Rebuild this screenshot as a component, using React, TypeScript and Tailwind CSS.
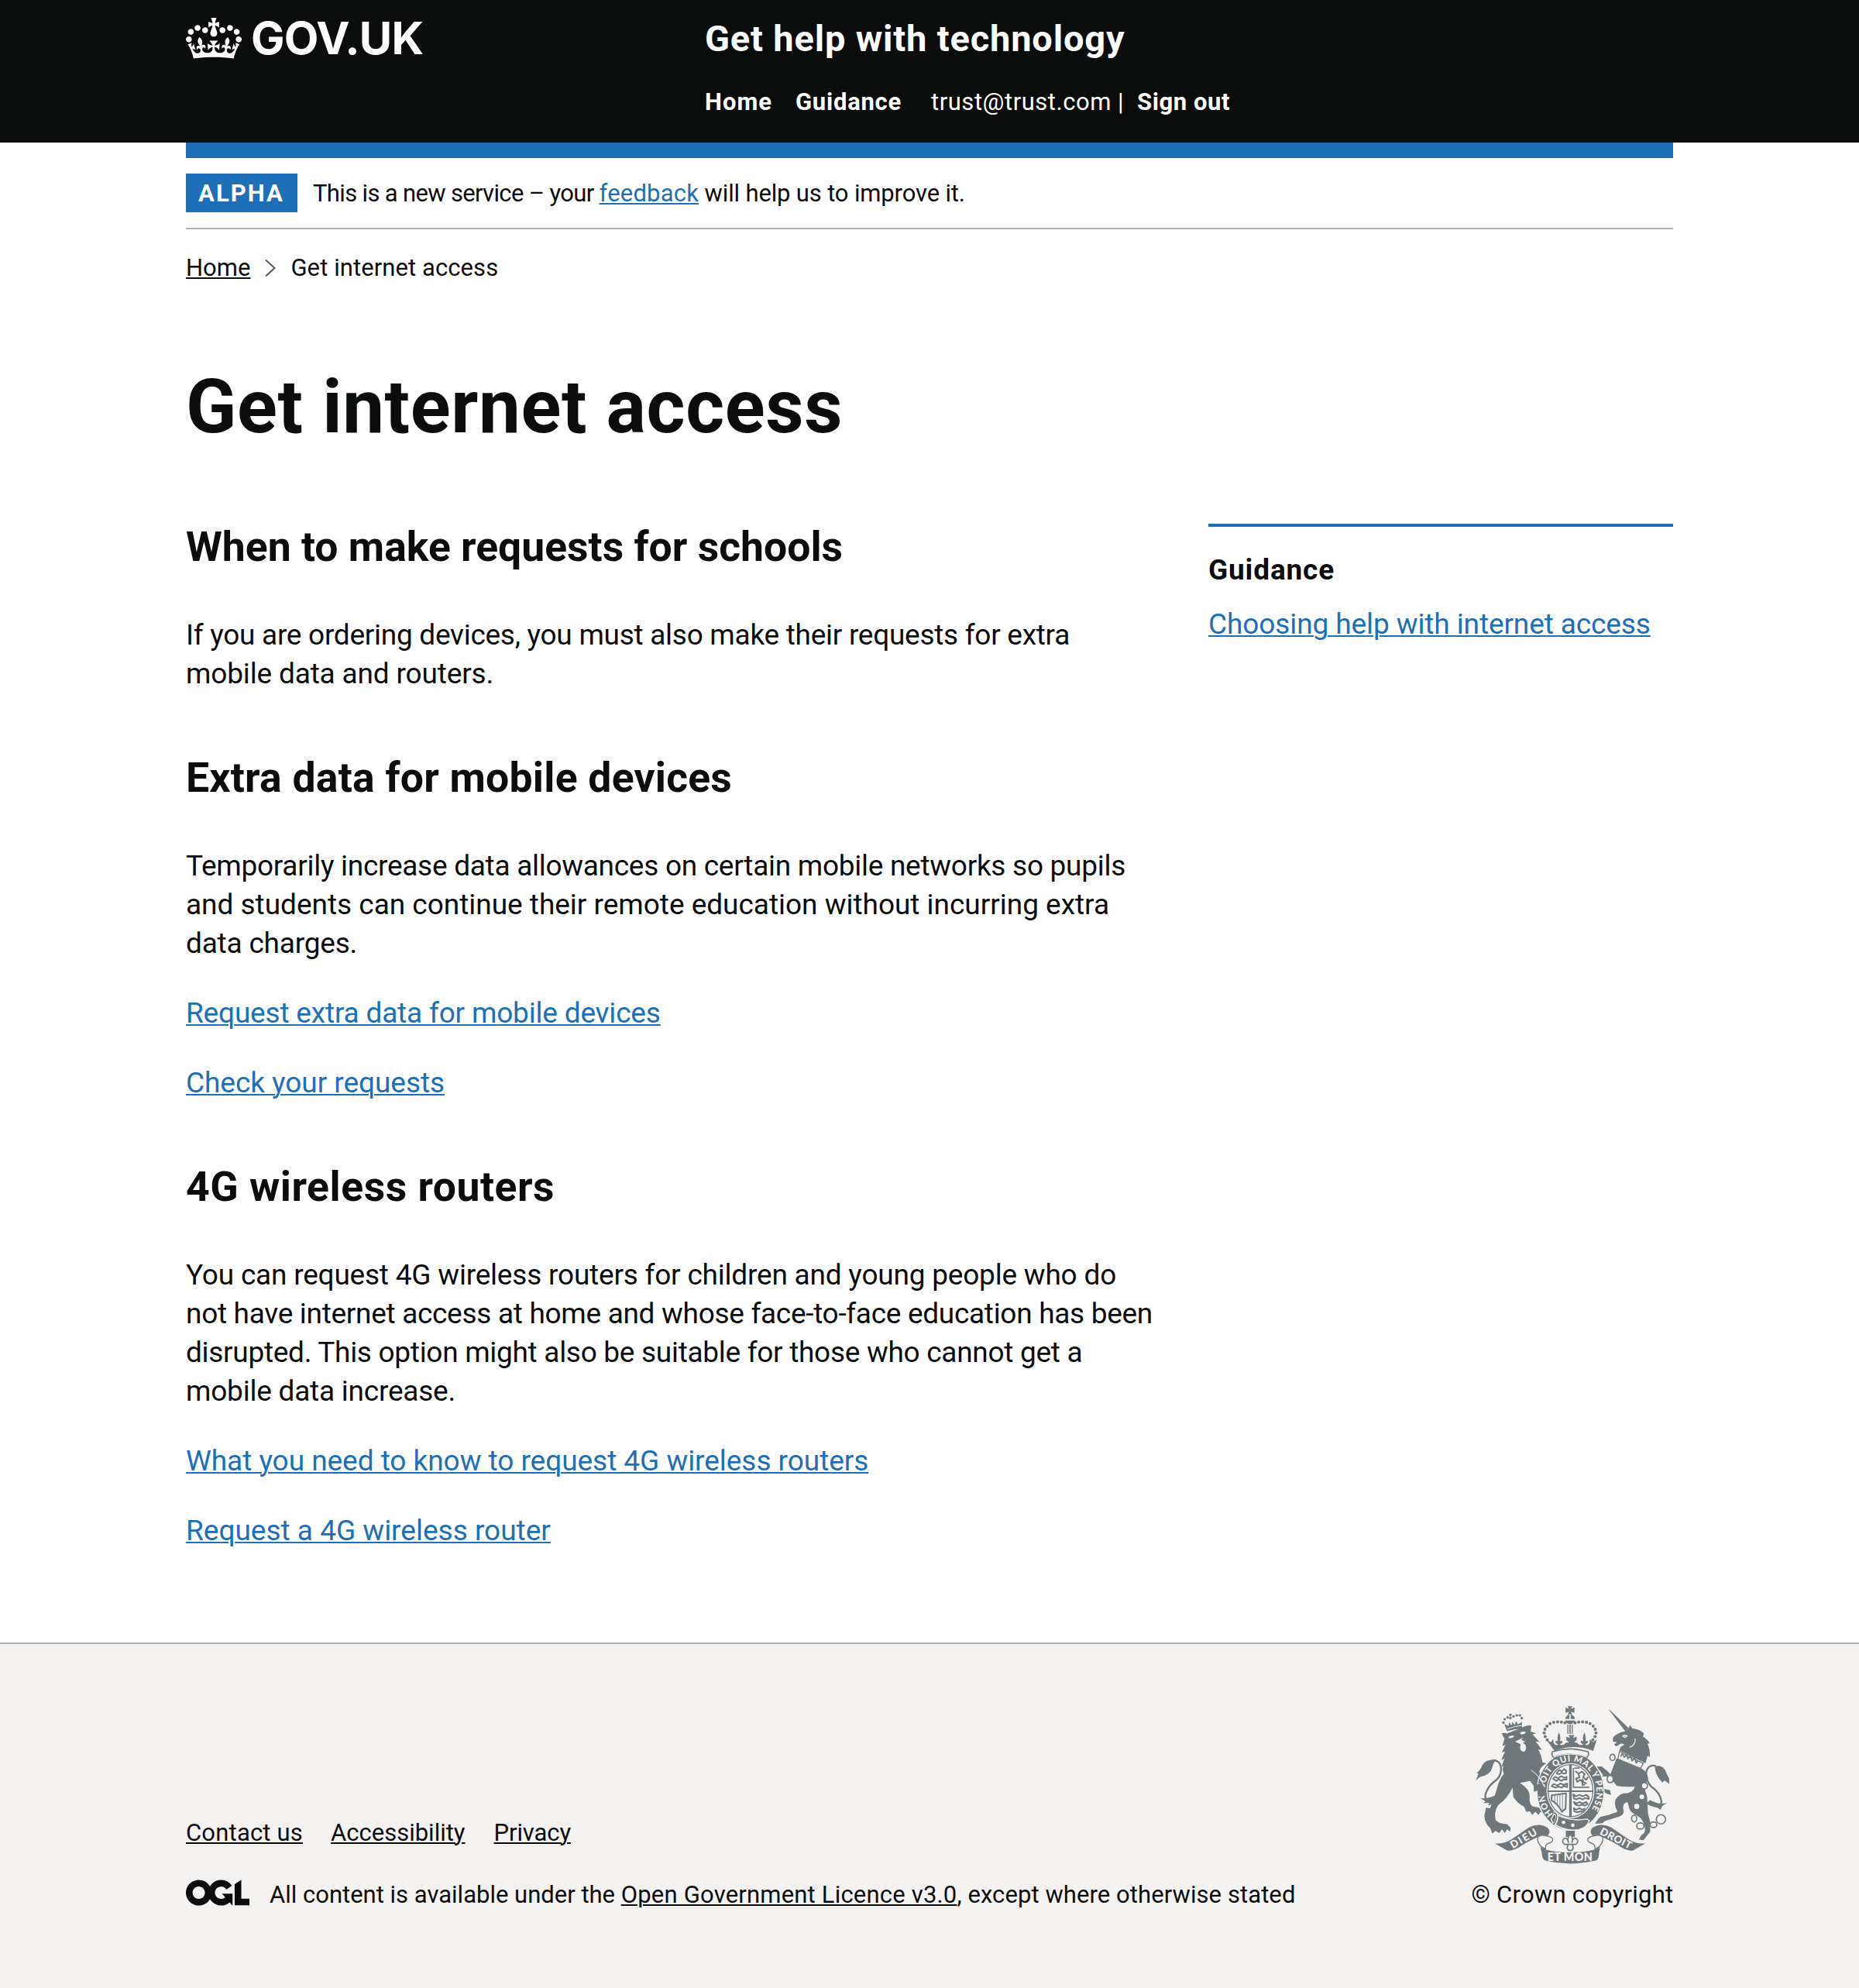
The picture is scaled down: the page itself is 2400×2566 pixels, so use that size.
import React from "react";

const BEADS = [
  [418, 131], [404, 128], [389, 127], [374, 129], [360, 134],
  [348, 144], [340, 156], [337, 170], [341, 184], [349, 197],
];
const LION_CROWN_BEADS = [
  [179, 130], [184, 117], [195, 110], [206, 100], [218, 106], [231, 102], [243, 102], [250, 113], [206, 112],
];

function Crown() {
  return (
    <svg viewBox="0 0 132 97" className="mt-[23px] h-[53px] w-[72px]" fill="currentColor" fillRule="evenodd" aria-hidden="true">
      <path d="M25 30.2c3.5 1.5 7.7-.2 9.1-3.7 1.5-3.6-.2-7.8-3.9-9.2-3.6-1.4-7.6.3-9.1 3.9-1.4 3.5.3 7.5 3.9 9zM9 39.5c3.6 1.5 7.8-.2 9.2-3.7 1.5-3.6-.2-7.8-3.9-9.1-3.6-1.5-7.6.2-9.1 3.8-1.4 3.5.3 7.5 3.8 9zM4.4 57.2c3.5 1.5 7.7-.2 9.1-3.8 1.5-3.6-.2-7.7-3.9-9.1-3.5-1.5-7.6.3-9.1 3.8-1.4 3.5.3 7.6 3.9 9.1zm38.3-21.4c3.5 1.5 7.7-.2 9.1-3.8 1.5-3.6-.2-7.7-3.9-9.1-3.6-1.5-7.6.3-9.1 3.8-1.3 3.6.4 7.7 3.9 9.1zm64.4-5.6c-3.6 1.5-7.8-.2-9.1-3.7-1.5-3.6.2-7.8 3.8-9.2 3.6-1.4 7.7.3 9.2 3.9 1.3 3.5-.4 7.5-3.9 9zm15.9 9.3c-3.6 1.5-7.7-.2-9.1-3.7-1.5-3.6.2-7.8 3.7-9.1 3.6-1.5 7.7.2 9.2 3.8 1.5 3.5-.3 7.5-3.8 9zm4.7 17.7c-3.6 1.5-7.8-.2-9.2-3.8-1.5-3.6.2-7.7 3.9-9.1 3.6-1.5 7.7.3 9.2 3.8 1.3 3.5-.4 7.6-3.9 9.1zM89.3 35.8c-3.6 1.5-7.8-.2-9.2-3.8-1.4-3.6.2-7.7 3.9-9.1 3.6-1.5 7.7.3 9.2 3.8 1.4 3.6-.3 7.7-3.9 9.1zM69.7 17.7l8.9 4.7V9.3l-8.9 2.8c-.2-.3-.5-.6-.9-.9L72.4 0H59.6l3.5 11.2c-.3.3-.6.5-.9.9l-8.8-2.8v13.1l8.8-4.7c.3.3.6.7.9.9l-5 15.4v.1c-.2.8-.4 1.6-.4 2.4 0 4.1 3.1 7.5 7 8.1h.2c.3 0 .7.1 1 .1.4 0 .7 0 1-.1h.2c4-.6 7.1-4.1 7.1-8.1 0-.8-.1-1.7-.4-2.4V34l-5.1-15.4c.4-.2.7-.6 1-.9zM66 92.8c16.9 0 32.8 1.1 47.1 3.2 4-16.9 8.9-26.7 14-33.5l-9.6-3.4c1 4.9 1.1 7.2 0 10.2-1.5-1.4-3-4.3-4.2-8.7L108.6 76c2.8-2 5-3.2 7.5-3.3-4.4 9.4-10 11.9-13.6 11.2-4.3-.8-6.3-4.6-5.6-7.9 1-4.7 5.7-5.9 8-.5 4.3-8.7-3-11.4-7.6-8.8 7.1-7.2 7.9-13.5 2.1-21.1-8 6.1-8.1 12.3-4.5 20.8-4.7-5.4-12.1-2.5-9.5 6.2 3.4-5.2 7.9-2 7.2 3.1-.6 4.3-6.4 7.8-13.5 7.2-10.3-.9-10.9-8-11.2-13.8 2.5-.5 7.1 1.8 11 7.3L80.2 60c-4.1 4.4-8 5.3-12.3 5.4 1.4-4.4 8-11.6 8-11.6H55.5s6.4 7.2 7.9 11.6c-4.2-.1-8-1-12.3-5.4l1.4 16.4c3.9-5.5 8.5-7.7 10.9-7.3-.3 5.8-.9 12.8-11.1 13.8-7.2.6-12.9-2.9-13.5-7.2-.7-5 3.8-8.3 7.1-3.1 2.7-8.7-4.6-11.6-9.4-6.2 3.7-8.5 3.6-14.7-4.6-20.8-5.8 7.6-5 13.9 2.2 21.1-4.7-2.6-11.9.1-7.7 8.8 2.3-5.5 7.1-4.2 8.1.5.7 3.3-1.3 7.1-5.7 7.9-3.5.7-9-1.8-13.5-11.2 2.5.1 4.7 1.3 7.5 3.3l-4.7-15.4c-1.2 4.4-2.7 7.2-4.3 8.7-1.1-3-.9-5.3 0-10.2l-9.5 3.4c5 6.9 9.9 16.7 14 33.5 14.8-2.1 30.8-3.2 47.7-3.2z" />
    </svg>
  );
}

function OglLogo() {
  return (
    <svg viewBox="0 0 483.2 195.7" className="h-[34px] w-[82px]" fill="currentColor" aria-hidden="true">
      <path d="M421.5 142.8V.1l-50.7 32.3v161.1h112.4v-50.7zm-122.3-9.6A47.12 47.12 0 0 1 221 97.8c0-26 21.1-47.1 47.1-47.1 16.7 0 31.4 8.7 39.7 21.8l42.7-27.2A97.63 97.63 0 0 0 268.1 0c-36.5 0-68.3 20.1-85.1 49.7A98 98 0 0 0 97.8 0C43.9 0 0 43.9 0 97.8s43.9 97.8 97.8 97.8c36.5 0 68.3-20.1 85.1-49.7a97.76 97.76 0 0 0 149.6 25.4l19.4 22.2h3v-87.8h-80l24.3 27.5zM97.8 145c-26 0-47.1-21.1-47.1-47.1s21.1-47.1 47.1-47.1 47.1 21.1 47.1 47.1S123.8 145 97.8 145" />
    </svg>
  );
}

function RoyalArms() {
  const G = "#6f777b";
  const B = "#f3f2f1";
  return (
    <svg className="h-[204px] w-[250px]" viewBox="71 66 751 612" fill={G} fontFamily="Lato, sans-serif" fontWeight="700" aria-hidden="true">
      {/* crown above the shield */}
      <path d="M428 66h18l-5 11 13-6v22l-13-6 5 11h-18l5-11-13 6v-22l13 6z" />
      <path d="M435 99v17h-16q2-14 16-17zM440 99v17h16q-2-14-16-17zM418 122h39l-7 10q-13 8-25 0zM427 138h4v36h-4zM435 138h5v36h-5zM444 138h4v36h-4z" />
      {BEADS.map(([x, y]) => (
        <g key={x}>
          <circle cx={x} cy={y} r="6" />
          <circle cx={875 - x} cy={y} r="6" />
        </g>
      ))}
      <path d="M346 196l16 10 10-12 2 16q8 12 17 4l-10-6 0-8 9 2q-4-14 4-34 9 20 4 34l9-2 0 8-10 6q14 8 24-6l12-2-10-8v-14l14 6-5-12h22l-5 12 14-6v14l-10 8 12 2q10 14 24 6l-10-6 0-8 10 2q-5-14 4-34 8 20 4 34l9-2 0 8-10 6q9 8 17-4l2-16 10 12 16-10-14 44q-75-30-150 0z" />

      {/* lion */}
      <path d="M193 163l-11-28 16 8 4-14 8 12 4-14 8 12 6-14 8 12 14-10 2 26q-30 2-59 10z" />
      <path d="M194 155q28-12 58-14" stroke={B} strokeWidth="3" fill="none" />
      {LION_CROWN_BEADS.map(([x, y], i) => (
        <circle key={i} cx={x} cy={y} r="5" />
      ))}
      <path d="M172 172q8-4 20 0 30-10 58-22 20-12 38-8l-4 22 22 8-14 4 28 30-16-4 24 34-14-2q14 26 16 50l16 4q-24 12-28 34 14 18 22 28 10 14 14 32 8 30-6 40l-22 4-16-22 2-10-16 4 8-14q-16-20-22-28l-39 8q38 24 38 52-4 38 18 40l28 6 8 22-12-8-8 12-12-12-12 12-10-14-14 2-8-20q-26-12-42-38l-2-36q-22 44-54 66-20 24-12 60 12 14 44 16l14 14-2 14-12-8-8 14-12-14-10 14-14-8-14 10-6-20q-22-18-24-48l6-32 16 2q18-40 28-80 6-28 26-54-8-14-2-30l-8 4 12-32-12 4 14-32-12 4 14-30-12 4 8-28z" />
      <g fill={B}>
        <path d="M198 186q10-8 24-4-8 10-22 8zM242 170q10-8 24-4-4 10-18 10zM224 204l32-16-8 10 16 6-10 4q16 8 12 24-2 12-12 10-12-4-10-18l2-10z" />
      </g>
      <path d="M160 400q-8 34-38 32-22-8-8-36 8-20 28-36 28-18 28-52-4-36-36-30" fill="none" stroke={G} strokeWidth="7" />
      <path d="M152 274q-44-2-56 22-8 22-22 30l8 2-10 28q12-16 26-18 34-10 38-36 4-18 16-28zM88 422q30 6 62-12l8 4q-6 30-38 38l4-10-24 0 10-6z" />

      {/* unicorn */}
      <path d="M588 80l6 3 70 68-12 14z" />
      <path d="M604 188q18-20 46-24 12-4 20-24l8 12q30 4 46 20l-4 12q18 10 26 26l-8 2q12 26 8 52l-8-6-8 30-102-50 6-14 14-8q-10-10-24 2l-8 4-8-8 12-8-16-2z" />
      <path d="M642 182q10-6 16 0l-8 6zM668 226q24-8 22-34" fill="none" stroke={B} strokeWidth="4" />
      <path d="M629 242l92 46-10 20-88-36z" fill={B} stroke={G} strokeWidth="4" />
      <path d="M634 262l6-12 8 14 8-10 6 16 10-10 6 18 10-10 6 18 8-8" fill="none" stroke={G} strokeWidth="5" />
      <path d="M618 268l100 42q24 18 22 42-22 30-4 62 2 40 4 70l8 30v40l-12 14-14 18-18-2 10-18q16-8 14-26-4-36-36-52-26-12-28-38l-4-12q-20 4-16 28 6 18-14 28l-38 12q-20 4-28 14l-30 2 12-18 8-8 34-8 34-12q-16-24-8-48 18-26 44-24 28-6 30-26-34 2-68-2l-16-18-14-18-34-2-12 10 6 14 20 14-2 10 24 6 4 18-16-4-16-12-12 10-22-28 2-24q12-12 34-16l-14-22-18 6-8-14 18-6 16 0 20 16 14 14z" />
      <path d="M738 444q54 22 54-8-4-34-40-58-28-34-16-66 10-20 34-14" fill="none" stroke={G} strokeWidth="7" />
      <path d="M766 300q34-10 46 28l10 20v20l-18-14-8 8q-28-26-30-62zM748 430q30 20 66 12l-18 10-8 16-12-8q-30-6-40-20z" />

      {/* garter */}
      <ellipse cx="439" cy="397" rx="130" ry="151" stroke={B} strokeWidth="4" />
      <ellipse cx="439" cy="394" rx="93" ry="107" fill={B} />
      <ellipse cx="439" cy="394" rx="87" ry="101" fill="none" stroke={G} strokeWidth="4" />
      <path d="M369 243q69-22 138 0q6 10-4 22q-65-24-130 0q-10-12-4-22z" fill={B} stroke={G} strokeWidth="5" />
      <path d="M374 264q65-24 128 0" fill="none" stroke={B} strokeWidth="3" />
      <path id="garter" d="M372 485A101 117 0 1 1 506 485" fill="none" />
      <text fill={B} fontSize="34" fontWeight="900">
        <textPath href="#garter" textLength="510">HONI SOIT QUI MAL Y PENSE</textPath>
      </text>
      <path d="M296 372l36-6q14 20 13 44l-22 10-12-14 2-12-16 2z" />
      <path d="M286 314q34 22 52 66" stroke={B} strokeWidth="3" fill="none" />
      <path d="M376 482q60 34 126 22l10 6q-10 28-42 35-50 8-98-24l-8-16z" stroke={B} strokeWidth="4" />
      <path d="M372 480q18 0 14 20-2 18-12 26" fill="none" stroke={B} strokeWidth="12" />
      <path d="M372 480q18 0 12 22-2 16-12 24" fill="none" stroke={G} strokeWidth="5" />
      <g fill={B}>
        <circle cx="412" cy="517" r="7" />
        <circle cx="448" cy="528" r="7" />
      </g>

      {/* shield quarters */}
      <path d="M434 292h10v205h-10zM350 393h178v6H350z" />
      <path d="M448 306h5v76h-5zM448 378h64v5h-64zM454 304h22l-4 5h-18z" />
      <g fill="none" stroke={G} strokeWidth="6" strokeLinejoin="round">
        <path d="M388 322l8-8 10 6 8-10 8 6v10l-10 2-8-4-8 6-10-2zM372 348l8-8 12 6 10-8 14 6 8-4v12l-12-2-8 6-10-6-10 6zM366 376l8-8 14 6 12-8 14 6 12-6v14l-14-4-8 6-12-4-12 4z" />
        <path d="M458 318l12 10 4 14-14 6 6 12 10-8 8 6 2 14 10-2M470 328l14-8 10 10-6 12 12 10 8-12M484 348l6 14 12 4" />
        <path d="M450 408l10 8 14-6 12 6 14-6 10 8v8l-14-4-10 6-12-6-12 6-10-4zM452 438l10 6 12-6 12 6 14-6 6 8-12 6-12-4-10 4-14-4zM452 462l10 6 12-6 10 6 10-4-4 12-14-2-10 4-12-4z" />
        <path d="M366 412l56-8-2 60-14 12q-16-30-40-44z" />
      </g>
      <path d="M378 414v24M388 412v36M398 411v50M408 409v60" stroke={G} strokeWidth="2.5" />

      {/* pendant */}
      <path d="M421 549h35v24h-10l-8-12-8 12h-9z" />
      <path d="M438 562q14 16 6 34 6-24 18-16 12 12-2 22h-14l4 14q-4 12-12 10-8 2-12-10l4-14h-14q-14-10-2-22 12-8 18 16-8-18 6-34zM422 602h32" fill={B} stroke={G} strokeWidth="5" />

      {/* chain */}
      <g fill={B} stroke={G} strokeWidth="5">
        <ellipse cx="602" cy="265" rx="10" ry="12" />
        <ellipse cx="593" cy="349" rx="12" ry="14" />
        <circle cx="726" cy="375" r="12" />
        <ellipse cx="686" cy="502" rx="10" ry="13" />
        <ellipse cx="710" cy="531" rx="14" ry="12" />
        <ellipse cx="761" cy="526" rx="13" ry="11" />
        <circle cx="790" cy="505" r="18" />
      </g>
      <g fill={B}>
        <circle cx="585" cy="291" r="7" />
        <circle cx="716" cy="418" r="9" />
        <circle cx="696" cy="455" r="10" />
      </g>

      {/* motto ribbon */}
      <path d="M145 598q34 4 66-16l68-46q40-20 72 2 12 14 2 28l-6 2q-16-6-30 4-50 22-82 44-24 12-42 10z" />
      <path d="M730 598q-34 4-66-16l-68-46q-40-20-72 2-12 14-2 28l6 2q16-6 30 4 50 22 82 44 24 12 42 10z" />
      <path d="M312 576q8-12 28-8 30 4 30 16 0 10-16 14-14 6-12 22-16-6-20-14-14-16-10-30z" fill={B} stroke={G} strokeWidth="4" />
      <path d="M564 576q-8-12-28-8-30 4-30 16 0 10 16 14 14 6 12 22 16-6 20-14 14-16 10-30z" fill={B} stroke={G} strokeWidth="4" />
      <path d="M322 612q20 14 60 18 60 6 110 0 40-4 62-18-4 18-6 36 0 14-14 18-96 22-190 0-12-4-14-16-2-18-8-38z" />
      <g fill={B} fontWeight="900">
        <text x="350" y="667" fontSize="43" textLength="174">ET MON</text>
        <text transform="translate(215 619) rotate(-30)" fontSize="40" textLength="112">DIEU</text>
        <text transform="translate(550 561) rotate(27)" fontSize="40" textLength="132">DROIT</text>
      </g>
    </svg>
  );
}

const link = "underline decoration-2 underline-offset-[2px]";
const blueLink = "text-[#1d70b8] underline decoration-2 underline-offset-[2px]";

export default function App() {
  return (
    <div className="min-h-[2566px] bg-white font-['Roboto',sans-serif] text-[#0b0c0c] whitespace-nowrap">
      <header className="h-[184px] bg-[#0b0c0c] text-white">
        <div className="mx-auto flex w-[1920px]">
          <div className="flex w-[670px] items-start">
            <Crown />
            <span className="mt-[19px] ml-[12px] font-['Inter',sans-serif] text-[58px] leading-[60px] font-bold tracking-[-0.8px]">GOV.UK</span>
          </div>
          <div className="pt-5">
            <div className="text-[47px] leading-[60px] font-bold tracking-[0.83px]">Get help with technology</div>
            <nav className="mt-8 flex text-[31px] leading-10 font-bold">
              <a className="tracking-[1px]">Home</a>
              <a className="ml-[30px] tracking-[0.75px]">Guidance</a>
              <span className="ml-[38px] font-normal tracking-[0.54px]">trust@trust.com</span>
              <span className="ml-2 w-[25px] font-normal">|</span>
              <a className="tracking-[0.57px]">Sign out</a>
            </nav>
          </div>
        </div>
      </header>

      <div className="mx-auto w-[1920px]">
        <div className="h-5 bg-[#1d70b8]" />
        <div className="flex items-center border-b-2 border-[#b1b4b6] py-5">
          <strong className="h-[50px] w-[144px] bg-[#1d70b8] pl-4 text-[31px] leading-[52px] font-bold tracking-[2.09px] text-white">ALPHA</strong>
          <span className="ml-5 h-[50px] text-[31px] leading-[52px] whitespace-pre">
            <span className="tracking-[-0.66px]">{"This is a new service – your "}</span>
            <a className={`${blueLink} tracking-[0.19px]`}>feedback</a>
            <span className="tracking-[-0.15px]">{" will help us to improve it."}</span>
          </span>
        </div>

        <div className="mt-[30px] flex text-[31px] leading-10">
          <a className={link}>Home</a>
          <svg viewBox="0 0 14 22" className="mt-[9px] ml-[19px] h-[22px] w-[14px]" fill="none" stroke="#505a5f" strokeWidth="2">
            <path d="M1 .5L12.5 11 1 21.5" />
          </svg>
          <span className="ml-[19px] tracking-[0.08px]">Get internet access</span>
        </div>

        <h1 className="mt-[109px] text-[96px] leading-[100px] font-bold tracking-[0.63px]">Get internet access</h1>

        <div className="mt-[101px] flex justify-between">
          <main className="w-[1280px] text-[37px] leading-[50px]">
            <h2 className="text-[53.5px] leading-[60px] font-bold">When to make requests for schools</h2>
            <p className="mt-[59px]">
              <span className="block tracking-[-0.275px]">If you are ordering devices, you must also make their requests for extra</span>
              <span className="block tracking-[-0.16px]">mobile data and routers.</span>
            </p>

            <h2 className="mt-[79px] text-[53.5px] leading-[60px] font-bold tracking-[0.23px]">Extra data for mobile devices</h2>
            <p className="mt-[59px]">
              <span className="block tracking-[-0.28px]">Temporarily increase data allowances on certain mobile networks so pupils</span>
              <span className="block tracking-[-0.017px]">and students can continue their remote education without incurring extra</span>
              <span className="block tracking-[-0.2px]">data charges.</span>
            </p>
            <p className="mt-10"><a className={`${blueLink} tracking-[-0.184px]`}>Request extra data for mobile devices</a></p>
            <p className="mt-10"><a className={`${blueLink} tracking-[-0.05px]`}>Check your requests</a></p>

            <h2 className="mt-[79px] text-[53.5px] leading-[60px] font-bold tracking-[0.52px]">4G wireless routers</h2>
            <p className="mt-[59px]">
              <span className="block tracking-[-0.208px]">You can request 4G wireless routers for children and young people who do</span>
              <span className="block tracking-[-0.3px]">not have internet access at home and whose face-to-face education has been</span>
              <span className="block tracking-[-0.292px]">disrupted. This option might also be suitable for those who cannot get a</span>
              <span className="block tracking-[-0.225px]">mobile data increase.</span>
            </p>
            <p className="mt-10"><a className={`${blueLink} tracking-[-0.044px]`}>What you need to know to request 4G wireless routers</a></p>
            <p className="mt-10"><a className={blueLink}>Request a 4G wireless router</a></p>
          </main>

          <aside className="w-[600px] border-t-4 border-[#1d70b8] text-[37px] leading-[50px]">
            <h2 className="mt-[31px] font-bold tracking-[0.83px]">Guidance</h2>
            <p className="mt-5"><a className={`${blueLink} tracking-[-0.1px]`}>Choosing help with internet access</a></p>
          </aside>
        </div>
      </div>

      <footer className="mt-[119px] h-[446px] border-t-2 border-[#b1b4b6] bg-[#f3f2f1] pt-20 text-[31px] leading-10">
        <div className="mx-auto flex w-[1920px] items-end justify-between">
          <div>
            <div className="flex">
              <a className={`${link} tracking-[0.19px]`}>Contact us</a>
              <a className={`${link} ml-[36px]`}>Accessibility</a>
              <a className={`${link} ml-[37px] tracking-[-0.09px]`}>Privacy</a>
            </div>
            <div className="mt-10 flex">
              <OglLogo />
              <span className="ml-[26px] whitespace-pre">
                {"All content is available under the "}
                <a className={`${link} tracking-[0.19px]`}>Open Government Licence v3.0</a>
                <span className="tracking-[0.08px]">, except where otherwise stated</span>
              </span>
            </div>
          </div>
          <div className="flex w-[260px] flex-col items-center">
            <RoyalArms />
            <a className="mt-5 tracking-[0.25px]">© Crown copyright</a>
          </div>
        </div>
      </footer>
    </div>
  );
}
